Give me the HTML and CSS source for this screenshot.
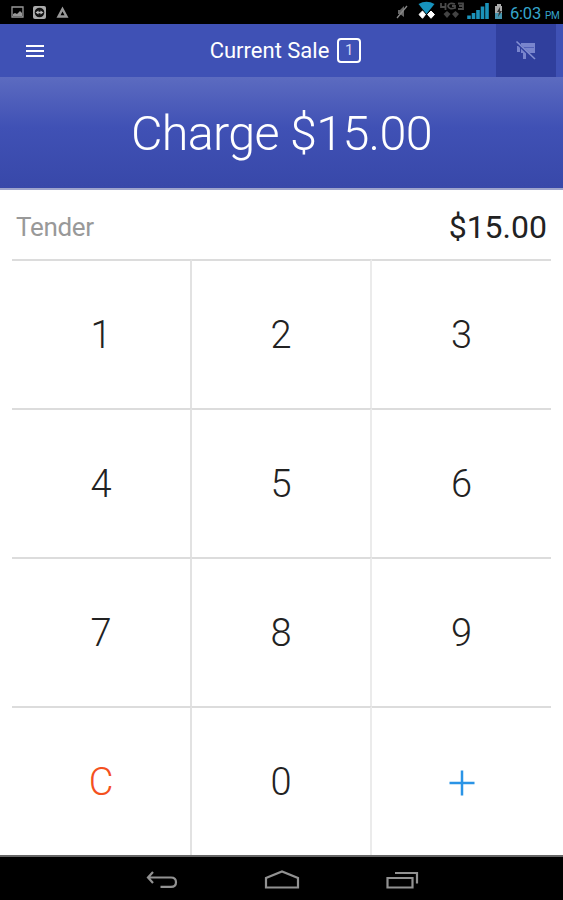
FILE: index.html
```html
<!DOCTYPE html>
<html lang="en">
<head>
  <meta charset="UTF-8">
  <meta name="viewport" content="width=device-width, initial-scale=1.0">
  <title>Current Sale</title>
  <link rel="stylesheet" href="styles.css">
</head>
<body>
  <div class="status">
    <svg class="status-left" width="60" height="24" viewBox="0 0 60 24">
      <!-- picture -->
      <path d="M2 7h11v10H2z" fill="none" stroke="#999" stroke-width="1.3"/>
      <path d="M3 16v-2l2-1 2 1 3-3 2 2v3z" fill="#999"/>
      <!-- remote -->
      <rect x="23" y="6" width="13" height="13" rx="2" fill="#aaa"/>
      <circle cx="29.500" cy="12.500" r="4.800" fill="#111"/>
      <path d="M25.500 12.500l3-2v1.300h2v-1.300l3 2-3 2v-1.300h-2v1.300z" fill="#bbb"/>
      <!-- warning -->
      <path d="M52.500 9l4 7.500h-8z" fill="none" stroke="#999" stroke-width="2.400"/>
    </svg>
    <div class="status-right">
      <svg width="108" height="24" viewBox="0 0 108 24">
        <!-- muted -->
        <path d="M4 10h2l4-4v11l-4-3H4z" fill="#666"/>
        <path d="M3 18L13 6" stroke="#888" stroke-width="1.300"/>
        <!-- wifi -->
        <path d="M24.500 4q8-4.500 16 0L32.500 14z" fill="#1793bd"/>
        <path d="M28.500 11l3 3.500-3 3.800-3.500-3.800zM37 11l3.500 3.500-3.500 3.800-3.500-3.800z" fill="#fff" stroke="#fff"/>
        <!-- network -->
        <path d="M47 3v4h5M51.500 3v7M61 4q-6-2-7 2 1 4 7 2V6h-3M64 3.500h5v2.500h-4 4v3h-5" fill="none" stroke="#4a4a4a" stroke-width="1.800"/>
        <path d="M49.500 14l3.500-3 3.500 3-3.500 4zM58 14l3.500-3 3.500 3-3.500 4z" fill="#444"/>
        <!-- signal -->
        <path d="M75 15.500v3.500M79.500 13V19M84 10v9M88.500 6.500v12.500M93 3v16" stroke="#1b93bb" stroke-width="3.600"/>
        <!-- battery -->
        <path d="M103 4h4v2h2v13h-8V6h2z" fill="#aaa"/>
        <path d="M101 13h8v6h-8z" fill="#4694ad"/>
        <path d="M106 7l-3 5h2l-1 5 4-6h-2z" fill="#333"/>
      </svg>
      <span class="time">6:03 <small>PM</small></span>
    </div>
  </div>

  <div class="header">
    <div class="menu">
      <span></span>
      <span></span>
      <span></span>
    </div>
    <h1 class="title">Current Sale <span class="count">1</span></h1>
    <div class="reader">
      <svg width="22" height="22" viewBox="0 0 22 22">
        <path d="M6 3h14v10H6z" fill="#7985cd"/>
        <path d="M2 6h3v6H2zM8 10h3v9H8z" fill="#7985cd"/>
        <path d="M7 7.500h12" stroke="#5361b8"/>
        <path d="M2 3l17 16" stroke="#303f9d" stroke-width="3"/>
        <path d="M1.500 1.500L20 19" stroke="#8490d2" stroke-width="1.600"/>
      </svg>
    </div>
  </div>

  <div class="charge"><span>Charge $15.00</span></div>

  <div class="main">
    <div class="tender">
      <span class="label">Tender</span>
      <span class="amount">$15.00</span>
    </div>
    <div class="keypad">
      <div class="key">1</div>
      <div class="key">2</div>
      <div class="key">3</div>
      <div class="key">4</div>
      <div class="key">5</div>
      <div class="key">6</div>
      <div class="key">7</div>
      <div class="key">8</div>
      <div class="key">9</div>
      <div class="key clear">C</div>
      <div class="key">0</div>
      <div class="key add">
        <svg width="26" height="26" viewBox="0 0 26 26">
          <path d="M13 .500v25M.500 13h25" stroke="#2a94e6" stroke-width="2.500"/>
        </svg>
      </div>
    </div>
  </div>

  <div class="nav">
    <svg width="34" height="24" viewBox="0 0 34 24">
      <path d="M9 3L4 8.500 9 14M4.500 8.500H27q5 0 5 4.700t-5 4.700H16.500" fill="none" stroke="#929292" stroke-width="2.200"/>
    </svg>
    <svg width="36" height="24" viewBox="0 0 36 24">
      <path d="M2 18.500V9l16-6.500L34 9v9.500z" fill="none" stroke="#929292" stroke-width="2.200"/>
    </svg>
    <svg width="34" height="24" viewBox="0 0 34 24">
      <path d="M1.500 9H26.500v9.500H1.500zM9 4H31v10.500" fill="none" stroke="#929292" stroke-width="2.200"/>
    </svg>
  </div>
</body>
</html>
```

FILE: styles.css
```css
*{
	box-sizing: border-box;
}
body{
	margin: 0;
	height: 900px;
	display: flex;
	flex-direction: column;
	font-family: Roboto, "Liberation Sans", sans-serif;
	background-color: #fff;
	overflow: hidden;
}
svg{
	display: block;
}
.status{
	height: 24px;
	display: flex;
	justify-content: space-between;
	padding: 0 5px 0 10px;
	background-color: #000;
}
.status-right{
	display: flex;
	gap: 8px;
}
.time{
	width: 48px;
	font-size: 16.5px;
	line-height: 27px;
	letter-spacing: -0.2px;
	color: #35a5cc;
	white-space: nowrap;
}
.time small{
	font-size: 10px;
}
.header{
	height: 53px;
	display: grid;
	grid-template-columns: 67px 1fr 67px;
	align-items: center;
	background-color: #3f51b5;
}
.menu{
	display: flex;
	flex-direction: column;
	gap: 3px;
	padding-left: 26px;
}
.menu span{
	width: 18px;
	height: 2px;
	background-color: #fff;
}
.title{
	display: flex;
	align-items: center;
	justify-content: center;
	gap: 8px;
	margin: 0;
	padding-left: 8px;
	font-size: 22px;
	font-weight: 400;
	color: #fff;
}
.count{
	width: 24px;
	height: 25px;
	border: 2px solid #fff;
	border-radius: 4px;
	font-size: 15px;
	line-height: 21px;
	text-align: center;
	color: #d5daf2;
}
.reader{
	width: 60px;
	height: 53px;
	display: flex;
	align-items: center;
	justify-content: center;
	background-color: #303f9d;
}
.charge{
	height: 113px;
	display: flex;
	align-items: center;
	justify-content: center;
	padding-top: 1px;
	background: linear-gradient(#5c6bc0, #4051b5 45%, #3848a9);
	border-bottom: 2px solid #9ea4cc;
	font-size: 48.5px;
	font-weight: 300;
	letter-spacing: -0.7px;
	color: #fff;
}
.main{
	flex: 1;
	display: flex;
	flex-direction: column;
	padding: 0 12px;
}
.tender{
	height: 69px;
	display: flex;
	align-items: center;
	justify-content: space-between;
	padding: 5px 4px 0;
}
.label{
	font-size: 26px;
	letter-spacing: -0.3px;
	color: #999;
}
.amount{
	font-size: 32px;
	color: #222;
}
.keypad{
	flex: 1;
	display: grid;
	grid-template-columns: 180px 180px 1fr;
	grid-template-rows: repeat(4, 1fr);
}
.key{
	display: flex;
	align-items: center;
	justify-content: center;
	border-top: 2px solid #dcdcdc;
	border-right: 2px solid #e2e2e2;
	font-size: 38px;
	font-weight: 300;
	color: #222;
}
.key:nth-child(3n){
	border-right: 0;
}
.key:nth-child(3n + 2){
	border-right-color: #ebebeb;
}
.clear{
	color: #f4511e;
}
.add{
	padding-top: 3px;
}
.nav{
	height: 45px;
	display: flex;
	justify-content: center;
	gap: 86px;
	padding-top: 12px;
	border-top: 2px solid #666;
	background-color: #000;
}
```
